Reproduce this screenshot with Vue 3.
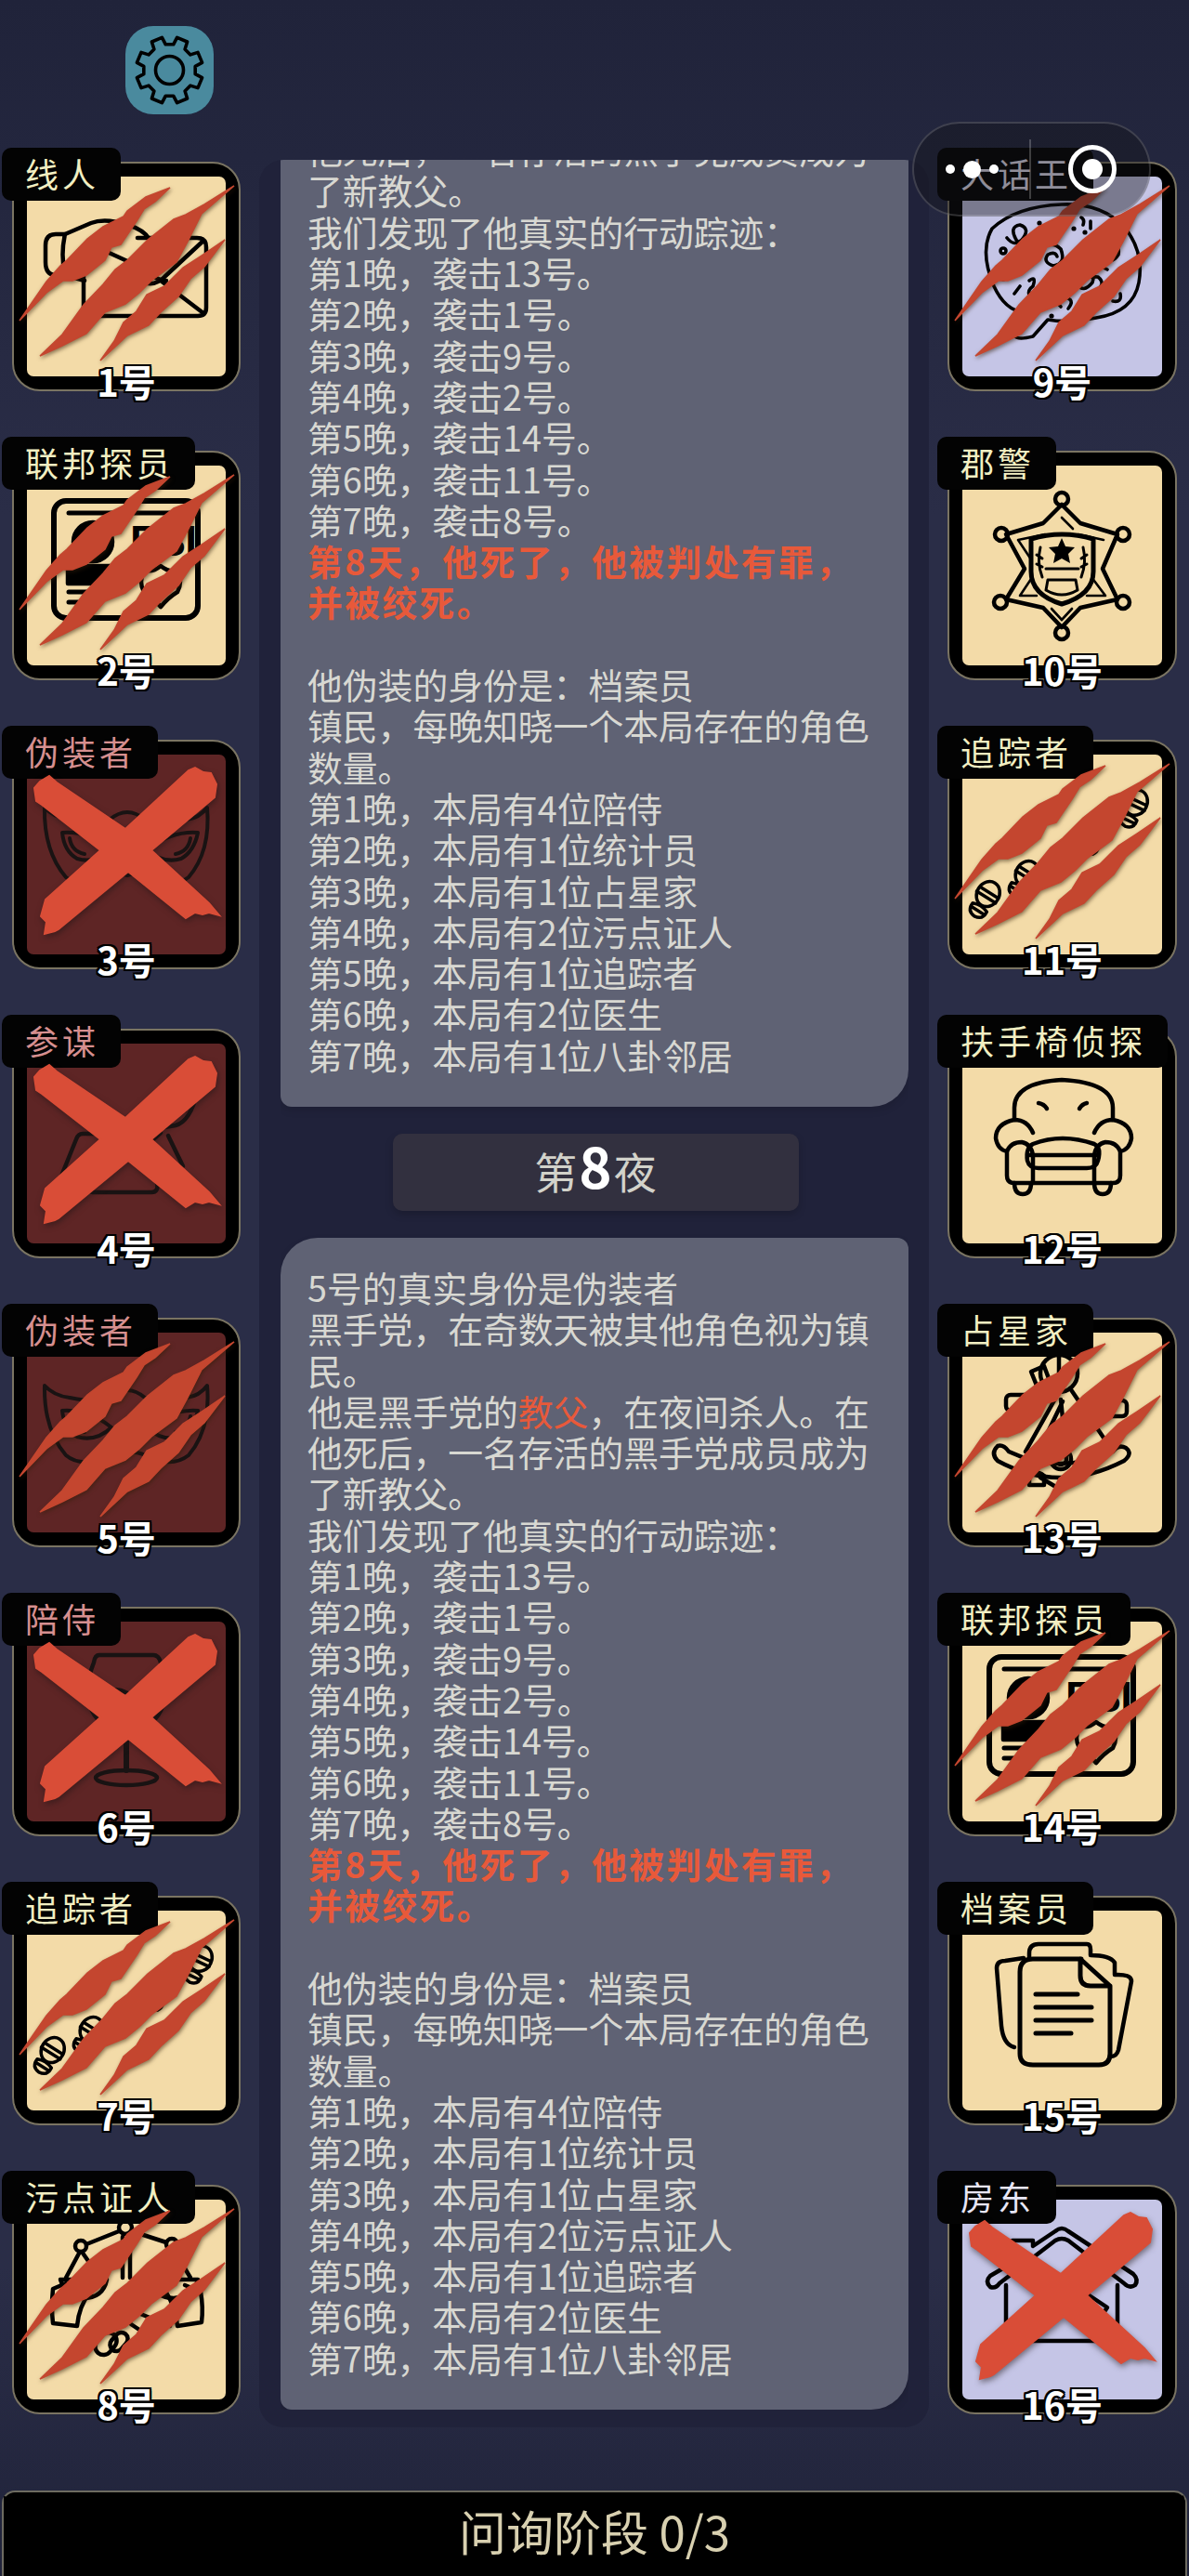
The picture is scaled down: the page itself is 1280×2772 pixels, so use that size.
<template>
  <div class="page">
    <div class="topbar">
      <div class="gear">
        <svg viewBox="0 0 95 95" width="95" height="95">
          <path :d="gearPath" fill="none" stroke="#000" stroke-width="3.6" stroke-linejoin="round" />
          <circle cx="47.5" cy="47.5" r="15" fill="none" stroke="#000" stroke-width="3.6" />
        </svg>
      </div>
    </div>

    <div class="board">
      <div v-for="col in columns" :key="col.side" class="col" :class="'col--' + col.side">
        <div v-for="p in col.players" :key="p.id" class="card">
          <div class="face" :class="'face--' + p.face"></div>

          <svg class="art" viewBox="0 0 246 246" fill="none" :stroke="p.face === 'red' ? '#191313' : '#000'" stroke-width="4.5" stroke-linecap="round" stroke-linejoin="round">
            <g v-if="p.icon === 'informant'">
              <path d="M57 78 H47 Q36 78 36 90 V108 Q36 122 47 122 H57 M57 78 Q52 100 57 122" />
              <path d="M57 78 L85 66 Q100 60 125 68 Q143 74 148 84 M57 122 L78 128 M100 96 L135 112 Q155 128 166 128" />
              <path d="M135 82 H199 Q209 82 209 92 V157 Q209 166 200 166 H87 Q77 166 77 157 V112 L100 96" />
              <path d="M206 85 L164 124 Q152 136 138 128 M160 128 L206 163" />
            </g>

            <g v-else-if="p.icon === 'fbi'">
              <rect x="45" y="54" width="155" height="126" rx="13" stroke-width="6" />
              <path d="M61 67 H186" stroke-width="5" />
              <circle cx="87" cy="98" r="21" fill="#000" />
              <path d="M60 124 H112 V143 H60 Z" fill="#000" />
              <path d="M61 152 H102 M61 163 H92" stroke-width="5" />
              <text x="127" y="113" class="fbi" fill="#000" stroke="none">FBI</text>
              <path d="M160 124 Q170 132 178 128 Q184 142 178 152 Q168 158 160 168 Q152 158 142 152 Q136 142 142 128 Q150 132 160 124 Z" />
            </g>

            <g v-else-if="p.icon === 'mask'" stroke-width="4">
              <path d="M35 73 Q45 84 62 86 Q90 92 105 86 Q124 70 143 86 Q160 92 188 86 Q202 84 210 73 Q214 120 190 148 Q175 160 150 152 Q135 142 124 146 Q112 142 98 152 Q72 160 58 148 Q34 120 35 73 Z" />
              <path d="M54 100 Q82 98 107 118 Q90 134 70 128 Q56 120 54 100 Z M62 106 Q64 120 78 123" />
              <path d="M200 100 Q172 98 145 118 Q162 134 182 128 Q196 120 200 100 Z M192 106 Q190 120 176 123" />
            </g>

            <g v-else-if="p.icon === 'counsel'">
              <path d="M88 113 H76 Q71 113 69 119 L54 156 Q50 166 60 168 L87 176 H150 Q158 176 156 166 L148 146" />
              <path d="M168 115 L184 148 M88 150 Q110 148 130 138 L160 112" />
              <path d="M200 66 Q184 58 172 82 L164 106 L176 104 Q192 100 200 66 Z M170 84 L186 88" />
            </g>

            <g v-else-if="p.icon === 'wine'">
              <path d="M94 52 H152 Q158 52 160 60 Q170 90 160 112 Q150 132 123 132 Q96 132 86 112 Q76 90 88 60 Q89 52 94 52 Z" />
              <path d="M84 100 Q108 84 122 92 Q140 100 164 92" />
              <path d="M123 132 V176" stroke-width="6" />
              <ellipse cx="123" cy="184" rx="33" ry="8" />
            </g>

            <g v-else-if="p.icon === 'tracker'">
              <g v-for="(t, i) in shoeSpots" :key="i" :transform="t" stroke-width="3.5">
                <ellipse cx="0" cy="-7" rx="12" ry="14" />
                <path d="M-11 -9 H11 M-12 -3 H12" />
                <path d="M-9 10 Q0 6 9 10 Q10 20 0 21 Q-10 20 -9 10 Z M-9 14 H9" />
              </g>
            </g>

            <g v-else-if="p.icon === 'witness'">
              <circle cx="122" cy="46" r="7" />
              <circle cx="74" cy="66" r="6" />
              <circle cx="172" cy="64" r="6" />
              <path d="M115 50 L80 64 M129 50 L166 62 M119 56 V100 M127 56 V100" />
              <path d="M73 72 L58 100 M75 72 L96 102 M52 102 H102 Q98 122 76 122 Q58 120 52 102 Z" />
              <path d="M172 70 L155 100 M174 70 L192 100 M148 102 H200 Q196 120 174 122 Q154 122 148 102 Z" />
              <path d="M58 106 L44 112 Q42 132 44 149 L70 152 Q72 130 84 116" />
              <path d="M186 108 L203 115 Q206 132 204 148 L178 152 Q176 132 166 116" />
              <path d="M94 146 L110 140 Q124 132 136 138 L170 152 M140 158 L128 150 M150 170 Q140 180 128 172" />
              <rect x="92" y="158" width="18" height="26" rx="9" transform="rotate(40 101 171)" />
              <rect x="108" y="158" width="14" height="22" rx="7" transform="rotate(40 115 169)" />
            </g>

            <g v-else-if="p.icon === 'rumor'" stroke-width="3.6">
              <path d="M123 46 Q165 44 190 70 Q212 96 206 130 Q200 162 160 168 Q130 174 108 170 L92 188 Q76 192 73 188 Q80 178 82 162 Q62 160 50 134 Q34 96 48 72 Q74 48 123 46 Z" />
              <path d="M64 82 Q72 92 80 84 Q90 72 78 68 Q66 70 74 84 Q80 92 88 88" />
              <circle cx="60" cy="96" r="3" />
              <path d="M100 94 Q112 84 122 94 Q128 110 114 112 Q102 108 108 100 Q116 96 118 102" />
              <path d="M176 94 Q186 88 184 100 Q176 112 168 102 Q168 90 178 86" />
              <path d="M148 124 Q160 116 156 130 Q146 142 140 132 Q142 122 162 124 Q172 132 158 140" />
              <path d="M88 128 Q96 122 92 134 Q86 138 88 144 M122 156 Q114 148 126 146 Q138 148 130 158" />
              <path d="M178 150 Q188 152 186 142 M146 68 Q148 62 144 60 M154 64 V72 M72 142 L78 134 M164 112 L172 116" />
              <g fill="#000" stroke="none">
                <circle cx="99" cy="66" r="2.6" /><circle cx="118" cy="78" r="2.6" /><circle cx="90" cy="110" r="3" />
                <circle cx="60" cy="126" r="2.6" /><circle cx="136" cy="72" r="2.6" /><circle cx="148" cy="76" r="2.6" />
                <circle cx="112" cy="166" r="2.6" /><circle cx="192" cy="120" r="2.6" /><circle cx="104" cy="86" r="2.2" />
              </g>
            </g>

            <g v-else-if="p.icon === 'sheriff'">
              <path d="M123 58 L143 78 L183 90 L167 127 L183 160 L143 169 L123 190 L103 169 L63 160 L83 127 L63 90 L103 78 Z" />
              <path d="M123 72 L135 84 M105 90 L76 96 L92 120 M168 96 L141 90 M94 132 L78 156 H96 M152 132 L170 156 H150 M123 182 L112 170 M123 182 L134 170" stroke-width="2.6" />
              <circle cx="123" cy="52" r="7" /><circle cx="58" cy="90" r="7" /><circle cx="189" cy="90" r="7" />
              <circle cx="57" cy="163" r="7" /><circle cx="189" cy="163" r="7" /><circle cx="123" cy="196" r="7" />
              <path d="M90 95 Q123 85 157 95 V130 Q157 155 123 165 Q90 155 90 130 Z" stroke-width="5" fill="#f3dba8" />
              <path d="M123 94 L127 103 L137 104 L130 111 L132 121 L123 116 L114 121 L116 111 L109 104 L119 103 Z" fill="#000" stroke="none" />
              <path d="M106 127 H141 M108 139 H138 M108 139 L106 150 M138 139 L140 150 M106 150 Q123 160 140 150" stroke-width="3" />
              <path d="M100 104 Q96 120 102 136 M146 104 Q150 120 144 136 M96 112 L102 116 M96 122 L102 125 M150 112 L144 116 M150 122 L144 125" stroke-width="3" />
            </g>

            <g v-else-if="p.icon === 'armchair'">
              <path d="M72 98 V85 Q72 58 123 55 Q178 58 178 85 V98" />
              <path d="M98 80 Q104 81 107 86 M142 86 Q145 81 150 80" />
              <path d="M92 112 Q86 98 72 98 Q52 102 52 118 Q54 130 64 132 V158 Q64 166 72 166 H178 Q186 166 186 158 V132 Q196 130 198 118 Q198 102 178 98 Q164 98 158 112" />
              <path d="M64 132 Q68 122 80 122 Q90 124 92 136 V166 M186 132 Q182 122 170 122 Q160 124 158 136 V166" />
              <path d="M92 124 Q123 112 158 124 Q166 128 162 142 Q160 150 150 150 H98 Q88 150 86 142 Q84 128 92 124 Z M86 136 H162" />
              <path d="M72 166 Q72 178 81 178 Q90 178 90 166 M158 166 Q158 178 167 178 Q176 178 176 166" />
            </g>

            <g v-else-if="p.icon === 'astrologer'">
              <circle cx="120" cy="60" r="20" />
              <path d="M120 40 V80 M120 80 L84 144 M96 148 L124 90 M132 76 L170 132 M122 88 L128 148" />
              <path d="M90 58 L104 52 L110 68 L98 78 Z" />
              <rect x="63" y="83" width="36" height="17" rx="5" />
              <rect x="150" y="89" width="43" height="17" rx="5" />
              <path d="M54 138 Q46 146 54 154 Q120 190 190 154 Q200 146 192 140 Q184 136 178 144 Q120 170 66 144 Q60 136 54 138 Z" />
              <circle cx="122" cy="152" r="6" /><circle cx="122" cy="152" r="11" />
              <path d="M88 168 Q96 164 104 170 L104 180 H88 Z M100 172 L120 184" />
            </g>

            <g v-else-if="p.icon === 'archivist'">
              <path d="M72 163 Q60 160 58 140 L53 78 Q53 70 62 70 L82 67" />
              <path d="M88 68 V62 Q88 52 98 52 H150 Q154 52 154 58 V64 Q175 64 180 72 V85 Q198 84 198 92 L184 166 Q182 173 176 173" />
              <path d="M144 68 H92 Q78 68 78 82 V170 Q78 182 92 182 H163 Q175 182 175 170 V97 L143 68 V86 Q143 97 154 97 H175" stroke-width="5" />
              <path d="M95 106 H140 M95 120 H155 M95 134 H155 M95 148 H133" stroke-width="5" />
            </g>

            <g v-else-if="p.icon === 'landlord'">
              <path d="M46 98 Q40 104 46 110 Q52 112 56 106 L116 60 Q123 56 130 60 L190 106 Q196 112 202 108 Q206 102 200 96 L130 50 Q123 44 116 50 L92 66 V60 H70 V84 Z" />
              <path d="M63 108 V168 H183 V108" />
              <path d="M88 128 Q82 150 92 160 M148 116 L172 132 L160 150" />
            </g>
          </svg>

          <div class="name" :class="'name--' + p.face">{{ p.name }}</div>

          <svg v-if="p.mark === 'claw'" class="mark mark--claw" viewBox="0 0 246 246">
            <path d="M170 28 L144 38 L124 53 L120 59 L98 70 L81 83 L59 106 L52 112 L37 129 L8 171 L37 141 L55 128 L65 128 L80 122 L100 106 L107 92 L117 89 L134 64 L142 51 L154 43 Z" />
            <path d="M239 26 L207 46 L187 57 L174 62 L146 84 L140 90 L124 106 L111 116 L98 132 L77 154 L54 186 L30 209 L54 198 L80 185 L100 162 L122 153 L137 141 L150 128 L177 108 L189 86 L204 56 Z" />
            <path d="M229 84 L204 101 L184 114 L164 134 L145 143 L134 161 L120 173 L110 193 L95 214 L124 187 L147 176 L160 162 L179 145 L192 126 L207 113 Z" />
          </svg>
          <svg v-else-if="p.mark === 'cross'" class="mark mark--cross" viewBox="0 0 246 246">
            <path d="M24 52 L30 45 L40 39 L48 46 L122 96 L190 33 L197 30 L206 35 L214 36 L220 48 L218 62 L150 119 L212 176 L223 189 L212 186 L205 188 L197 186 L187 192 L125 142 L50 204 L46 206 L35 209 L37 196 L31 190 L36 172 L95 119 L32 70 L26 66 Z" />
          </svg>

          <div class="num">{{ p.id }}号</div>
        </div>
      </div>

      <div class="panel">
        <div class="feed">
          <template v-for="n in 2" :key="n">
            <div class="report">
              5号的真实身份是伪装者<br />
              黑手党，在奇数天被其他角色视为镇民。<br />
              他是黑手党的<span class="hot">教父</span>，在夜间杀人。在他死后，一名存活的黑手党成员成为了新教父。<br />
              我们发现了他真实的行动踪迹：<br />
              <template v-for="(t, i) in attacks" :key="t">第{{ i + 1 }}晚，袭击{{ t }}号。<br /></template>
              <span class="verdict">第8天，他死了，他被判处有罪，并被绞死。</span><br />
              <br />
              他伪装的身份是：档案员<br />
              镇民，每晚知晓一个本局存在的角色数量。<br />
              <template v-for="(c, i) in counts" :key="c">第{{ i + 1 }}晚，本局有{{ c }}<br v-if="i < counts.length - 1" /></template>
            </div>
            <div v-if="n === 1" class="night">第<b>8</b>夜</div>
          </template>
        </div>
      </div>
    </div>

    <div class="footer">
      <svg class="footer__edge" viewBox="0 0 1276 10" preserveAspectRatio="none">
        <path :d="edgePath" fill="#000" />
      </svg>
      <span>问询阶段 0/3</span>
    </div>

    <!-- 小程序右上角胶囊 -->
    <div class="capsule">
      <div class="capsule__dots"><i></i><i class="big"></i><i></i></div>
      <div class="capsule__line"></div>
      <div class="capsule__close"><i></i></div>
    </div>
  </div>
</template>

<script setup>
const columns = [
  {
    side: "left",
    players: [
      { id: 1, name: "线人", face: "cream", icon: "informant", mark: "claw" },
      { id: 2, name: "联邦探员", face: "cream", icon: "fbi", mark: "claw" },
      { id: 3, name: "伪装者", face: "red", icon: "mask", mark: "cross" },
      { id: 4, name: "参谋", face: "red", icon: "counsel", mark: "cross" },
      { id: 5, name: "伪装者", face: "red", icon: "mask", mark: "claw" },
      { id: 6, name: "陪侍", face: "red", icon: "wine", mark: "cross" },
      { id: 7, name: "追踪者", face: "cream", icon: "tracker", mark: "claw" },
      { id: 8, name: "污点证人", face: "cream", icon: "witness", mark: "claw" }
    ]
  },
  {
    side: "right",
    players: [
      { id: 9, name: "大话王", face: "blue", icon: "rumor", mark: "claw" },
      { id: 10, name: "郡警", face: "cream", icon: "sheriff" },
      { id: 11, name: "追踪者", face: "cream", icon: "tracker", mark: "claw" },
      { id: 12, name: "扶手椅侦探", face: "cream", icon: "armchair" },
      { id: 13, name: "占星家", face: "cream", icon: "astrologer", mark: "claw" },
      { id: 14, name: "联邦探员", face: "cream", icon: "fbi", mark: "claw" },
      { id: 15, name: "档案员", face: "cream", icon: "archivist" },
      { id: 16, name: "房东", face: "blue", icon: "landlord", mark: "cross" }
    ]
  }
]

const attacks = [13, 1, 9, 2, 14, 11, 8]
const counts = ["4位陪侍", "1位统计员", "1位占星家", "2位污点证人", "1位追踪者", "2位医生", "1位八卦邻居"]

const shoeSpots = [
  "translate(40 172) rotate(32)",
  "translate(82 150) rotate(32)",
  "translate(160 104) rotate(32)",
  "translate(200 74) rotate(25)"
]

// 齿轮轮廓：8 个齿
const gearPath = (() => {
  const pts = []
  for (let i = 0; i < 8; i++) {
    const a = (i / 8) * Math.PI * 2 - Math.PI / 8
    const w = Math.PI / 8
    const steps = [[-0.62, 28], [-0.42, 36], [0.42, 36], [0.62, 28]]
    steps.forEach(([k, r]) => {
      const t = a + k * w
      pts.push((47.5 + r * Math.cos(t)).toFixed(1) + " " + (47.5 + r * Math.sin(t)).toFixed(1))
    })
  }
  return "M" + pts.join(" L") + " Z"
})()

// 底栏顶部的毛边
const edgePath = (() => {
  let d = "M0 10"
  for (let x = 0; x <= 1276; x += 7) {
    const y = 4 + 1.6 * Math.sin(x * 0.9) + 1.2 * Math.sin(x * 0.23)
    d += " L" + x + " " + y.toFixed(1)
  }
  return d + " L1276 10 Z"
})()
</script>

<style scoped>
.page {
  position: relative;
  width: 1280px;
  height: 2772px;
  overflow: hidden;
  background: linear-gradient(180deg, #20233a 0, #2a2d47 20%, #2a2d47 88%, #20233a 100%);
  font-family: "Noto Sans CJK SC", "Noto Sans", sans-serif;
}

.topbar {
  height: 172px;
  padding: 28px 0 0 135px;
  box-sizing: border-box;
}
.gear {
  width: 95px;
  height: 95px;
  border-radius: 30px;
  background: #4a8a9e;
}
.gear svg {
  display: block;
}

.board {
  display: flex;
  height: 2440px;
  padding-left: 13px;
  gap: 20px;
}
.col {
  display: flex;
  flex-direction: column;
  gap: 64px;
  padding-top: 2px;
  width: 246px;
}
.col--left {
  order: 0;
}
.col--right {
  order: 2;
  width: 247px;
}

.card {
  position: relative;
  width: 100%;
  height: 247px;
  box-sizing: border-box;
  background: #000;
  border: 2px solid #7a7462;
  border-radius: 30px;
  padding: 14px;
}
.face {
  height: 100%;
  border-radius: 7px;
}
.face--cream {
  background: #f3dba8;
}
.face--blue {
  background: #c5c5e6;
}
.face--red {
  background: #5e2525;
}
.art,
.mark {
  position: absolute;
  left: -2px;
  top: -2px;
  width: 246px;
  height: 246px;
  overflow: visible;
}
.fbi {
  font-family: "Liberation Sans", sans-serif;
  font-weight: 700;
  font-size: 46px;
  letter-spacing: -1px;
}
.mark--claw {
  fill: #c4462f;
  stroke: #c4462f;
  stroke-width: 1.5;
  filter: drop-shadow(1px 2px 2px rgba(50, 30, 10, 0.55));
}
.mark--cross {
  fill: #d94d37;
  stroke: #d94d37;
  stroke-width: 2;
  filter: drop-shadow(1px 3px 3px rgba(30, 20, 20, 0.5));
}

.name {
  position: absolute;
  left: -13px;
  top: -17px;
  height: 57px;
  padding: 0 23px 0 25px;
  border-radius: 10px;
  background: #030303;
  font-size: 36px;
  line-height: 54px;
  letter-spacing: 4px;
  white-space: nowrap;
  color: #f2efc2;
}
.name--red {
  color: #d68f8f;
}
.name--blue {
  color: #e8e6f6;
}

.num {
  position: absolute;
  left: 0;
  right: 0;
  top: 212px;
  text-align: center;
  font-size: 40px;
  line-height: 44px;
  font-weight: 700;
  color: #fff;
  text-shadow: 2px 0 0 #000, -2px 0 0 #000, 0 2px 0 #000, 0 -2px 0 #000, 2px 2px 0 #000, -2px 2px 0 #000, 2px -2px 0 #000, -2px -2px 0 #000;
}

.panel {
  order: 1;
  width: 721px;
  height: 2440px;
  box-sizing: border-box;
  padding: 0 22px 19px 23px;
  background: #20223a;
  border-radius: 26px;
  overflow: hidden;
}
.feed {
  height: 100%;
  overflow: hidden;
  display: flex;
  flex-direction: column;
  gap: 29px;
}
.feed > .report:first-child {
  margin-top: -242px;
}
.report {
  flex: none;
  box-sizing: border-box;
  height: 1261px;
  padding: 31px 30px 0 29px;
  background: #5f6274;
  border-radius: 40px 12px 40px 12px;
  font-size: 37.8px;
  line-height: 44.3px;
  color: #d8d8d2;
  box-shadow: 0 4px 8px rgba(0, 0, 0, 0.12);
}
.hot {
  color: #e8593a;
}
.verdict {
  color: #e8593a;
  font-weight: 700;
  letter-spacing: 2.4px;
}
.night {
  flex: none;
  align-self: center;
  width: 437px;
  height: 83px;
  margin-left: 2px;
  background: #32303f;
  border-radius: 10px;
  box-shadow: 0 4px 8px rgba(0, 0, 0, 0.18);
  text-align: center;
  font-size: 46px;
  line-height: 78px;
  color: #d2d2ca;
}
.night b {
  font-size: 60px;
  line-height: 1;
  color: #fff;
  font-weight: 700;
  margin: 0 2px;
}

.footer {
  position: relative;
  box-sizing: border-box;
  height: 92px;
  margin: 68px 2px 0;
  background: #000;
  border: 2px solid #6d6b60;
  border-bottom: none;
  border-radius: 14px 14px 0 0;
  text-align: center;
  font-size: 51px;
  line-height: 82px;
  color: #d8d0b0;
}
.footer__edge {
  position: absolute;
  left: 0;
  top: 0;
  width: 100%;
  height: 10px;
}
.footer span {
  position: relative;
}

.capsule {
  position: absolute;
  left: 982px;
  top: 131px;
  width: 257px;
  height: 102px;
  box-sizing: border-box;
  display: flex;
  align-items: center;
  border: 2px solid rgba(255, 255, 255, 0.16);
  border-radius: 51px;
  background: rgba(20, 20, 24, 0.42);
}
.capsule__dots {
  width: 124px;
  display: flex;
  justify-content: center;
  align-items: center;
  gap: 9px;
}
.capsule__dots i {
  width: 10px;
  height: 10px;
  border-radius: 50%;
  background: #fff;
}
.capsule__dots i.big {
  width: 19px;
  height: 19px;
}
.capsule__line {
  width: 2px;
  height: 64px;
  background: rgba(255, 255, 255, 0.22);
}
.capsule__close {
  width: 52px;
  height: 52px;
  margin-left: 40px;
  box-sizing: border-box;
  border: 5px solid #fff;
  border-radius: 50%;
  display: flex;
  align-items: center;
  justify-content: center;
}
.capsule__close i {
  width: 22px;
  height: 22px;
  border-radius: 50%;
  background: #fff;
}
</style>

<style>
body {
  margin: 0;
  background: #20233a;
}
</style>
